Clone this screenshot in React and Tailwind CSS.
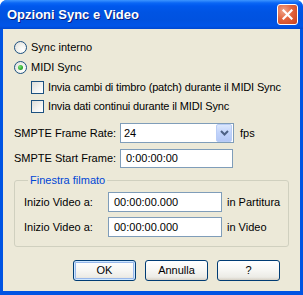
import React from "react";

const F = { fontFamily: '"Liberation Sans", Arial, sans-serif' };

function Radio({ checked }) {
  return (
    <span className="relative inline-flex w-[13px] h-[13px] rounded-full border border-[#1c5180] bg-[radial-gradient(circle_at_70%_70%,#ffffff_0%,#f4f4f0_40%,#dcdcd7_100%)] items-center justify-center shrink-0">
      {checked && (
        <span className="w-[5px] h-[5px] rounded-full bg-[radial-gradient(circle_at_35%_35%,#7be07b_0%,#2eae2e_60%,#218b21_100%)]" />
      )}
    </span>
  );
}

function Check() {
  return (
    <span className="inline-block w-[13px] h-[13px] border border-[#1c5180] bg-[linear-gradient(135deg,#dcdcd7_0%,#f5f5f3_60%,#ffffff_100%)] shrink-0" />
  );
}

function Btn({ children, def }) {
  return (
    <div
      className={
        "w-[63px] h-[21px] rounded-[3px] border border-[#003c74] flex items-center justify-center text-[11px] text-black bg-[linear-gradient(180deg,#ffffff_0%,#f6f6f3_50%,#ecebe6_85%,#d6d0c5_100%)] " +
        (def ? "shadow-[inset_0_0_0_1px_#cee7ff,inset_0_0_0_2px_#98b8ea]" : "")
      }
    >
      {children}
    </div>
  );
}

export default function App() {
  return (
    <div className="w-[303px] h-[295px] bg-white" style={F}>
      <div className="w-[303px] h-[295px] flex flex-col rounded-t-[7px] overflow-hidden bg-[#0054e3]">
        {/* Title bar */}
        <div className="h-[29px] shrink-0 flex items-center pl-[7px] pr-[5px] bg-[linear-gradient(180deg,#3d95ff_0px,#0a66f5_3px,#0058ee_6px,#0054e3_12px,#0052e0_20px,#0055e8_26px,#0048d0_29px)]">
          <span className="text-white font-bold text-[13px] flex-1 [text-shadow:1px_1px_0_#0a1e80]">
            Opzioni Sync e Video
          </span>
          <div className="w-[21px] h-[21px] rounded-[3px] border border-white bg-[radial-gradient(circle_at_30%_30%,#f0a58a_0%,#e2643e_45%,#c8401c_100%)] flex items-center justify-center">
            <svg width="11" height="11" viewBox="0 0 11 11">
              <path d="M1.5 1.5 L9.5 9.5 M9.5 1.5 L1.5 9.5" stroke="white" strokeWidth="2.2" strokeLinecap="square" />
            </svg>
          </div>
        </div>
        {/* Body */}
        <div className="flex-1 mx-[3px] mb-[4px] bg-[#ece9d8] flex flex-col px-[11px] pt-[8px] text-[11px] text-black whitespace-nowrap">
          <div className="h-[20px] flex items-center gap-[4px]">
            <Radio />
            <span>Sync interno</span>
          </div>
          <div className="h-[20px] flex items-center gap-[4px]">
            <Radio checked />
            <span>MIDI Sync</span>
          </div>
          <div className="h-[20px] flex items-center gap-[4px] pl-[17px]">
            <Check />
            <span className="tracking-[-0.15px]">Invia cambi di timbro (patch) durante il MIDI Sync</span>
          </div>
          <div className="h-[19px] flex items-center gap-[4px] pl-[17px]">
            <Check />
            <span className="tracking-[-0.15px]">Invia dati continui durante il MIDI Sync</span>
          </div>
          <div className="mt-[7px] flex items-center">
            <span className="w-[106px]">SMPTE Frame Rate:</span>
            <div className="w-[114px] h-[20px] border border-[#7f9db9] bg-white flex items-center">
              <span className="flex-1 pl-[3px]">24</span>
              <div className="w-[16px] h-[18px] mr-[1px] rounded-[2px] bg-[linear-gradient(180deg,#dce8fd_0%,#c1d3fb_50%,#b4c8f6_100%)] border border-[#b9cdf6] flex items-center justify-center">
                <svg width="9" height="6" viewBox="0 0 9 6">
                  <path d="M1 1 L4.5 4.5 L8 1" stroke="#4d6185" strokeWidth="2" fill="none" />
                </svg>
              </div>
            </div>
            <span className="ml-[6px]">fps</span>
          </div>
          <div className="mt-[6px] flex items-center">
            <span className="w-[106px]">SMPTE Start Frame:</span>
            <div className="w-[113px] h-[19px] border border-[#7f9db9] bg-white flex items-center pl-[5px]">
              0:00:00:00
            </div>
          </div>
          <fieldset className="mt-[6px] border border-[#d0d0bf] rounded-[3px] pl-[9px] pr-0 pb-[9px] pt-[5px] flex flex-col gap-[5px]">
            <legend className="ml-[4px] px-[2px] text-[#0046d5] leading-[13px]">Finestra filmato</legend>
            <div className="flex items-center">
              <span className="w-[84px]">Inizio Video a:</span>
              <div className="w-[114px] h-[20px] border border-[#7f9db9] bg-white flex items-center pl-[5px]">
                00:00:00.000
              </div>
              <span className="ml-[5px]">in Partitura</span>
            </div>
            <div className="flex items-center">
              <span className="w-[84px]">Inizio Video a:</span>
              <div className="w-[114px] h-[20px] border border-[#7f9db9] bg-white flex items-center pl-[5px]">
                00:00:00.000
              </div>
              <span className="ml-[5px]">in Video</span>
            </div>
          </fieldset>
          <div className="mt-[13px] flex gap-[9px] pl-[59px]">
            <Btn def>OK</Btn>
            <Btn>Annulla</Btn>
            <Btn>?</Btn>
          </div>
        </div>
      </div>
    </div>
  );
}
